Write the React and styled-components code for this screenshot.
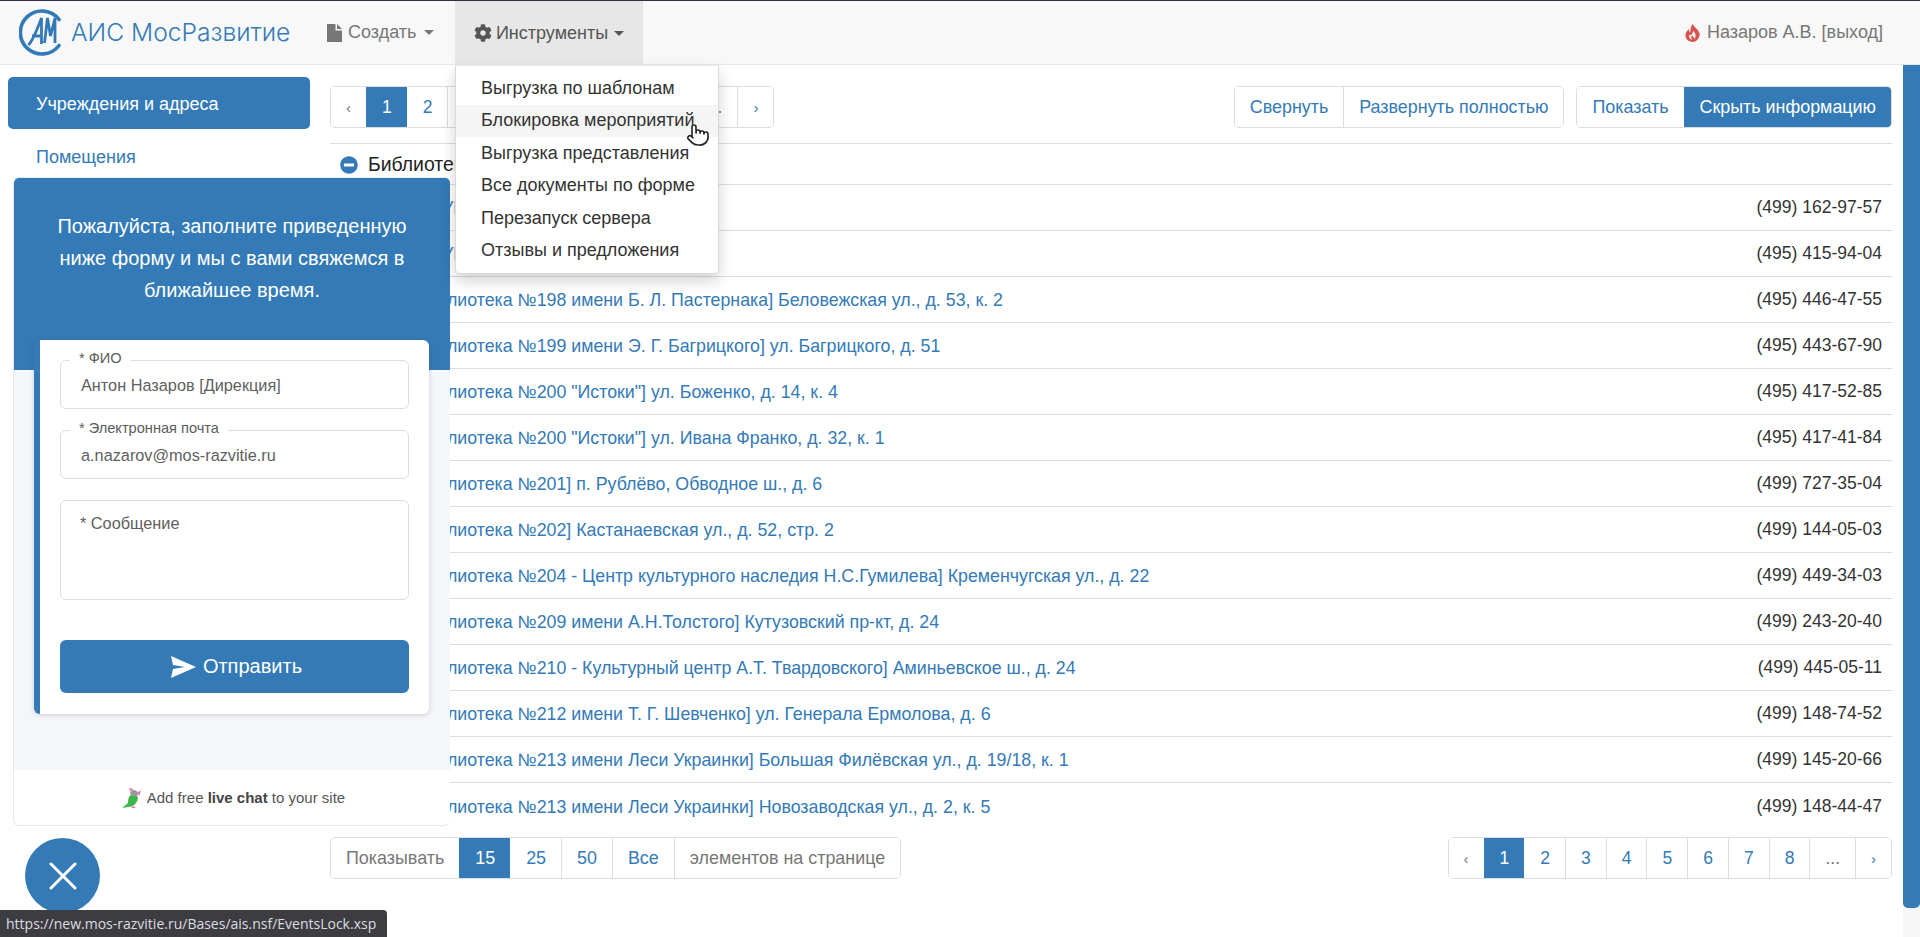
import React from 'react';
import styled, { createGlobalStyle } from 'styled-components';
import { FaCog, FaMinusCircle } from 'react-icons/fa';
import { Pointer } from 'lucide-react';

const BLUE = '#337ab7';

const GlobalStyle = createGlobalStyle`
  html, body {
    margin: 0;
    height: 100%;
    overflow: hidden;
    background: #fff;
  }
  body {
    font-family: "Liberation Sans", Arial, sans-serif;
    font-size: 18px;
    line-height: 25px;
    color: #333;
  }
  * { box-sizing: border-box; }
`;

const Page = styled.div`
  position: relative;
  height: 937px;
  border-top: 1px solid #2b3147;
  display: flex;
  flex-direction: column;
  overflow: hidden;
`;

const Navbar = styled.nav`
  height: 64px;
  flex: none;
  display: flex;
  align-items: stretch;
  background: #f8f8f8;
  border-bottom: 1px solid #e7e7e7;
  color: #777;
`;

const Brand = styled.div`
  width: 308px;
  padding-left: 19px;
  display: flex;
  align-items: center;
  gap: 6px;
  font-family: Inter, "Noto Sans", sans-serif;
  font-size: 24.6px;
  font-weight: 300;
  color: #337ab7;
`;

const NavItem = styled.div`
  display: flex;
  align-items: center;
  gap: ${({ $open }) => ($open ? '4px' : '6px')};
  padding: 0 ${({ $open }) => ($open ? '18.5px' : '19px')};
  margin-left: ${({ $open }) => ($open ? '2px' : '0')};
  height: ${({ $open }) => ($open ? '64px' : 'auto')};
  background: ${({ $open }) => ($open ? '#e7e7e7' : 'transparent')};
  color: ${({ $open }) => ($open ? '#555' : '#777')};

  svg { flex: none; }
`;

const Caret = styled.span`
  width: 0;
  height: 0;
  margin-left: 2px;
  border-top: 5px solid currentColor;
  border-left: 5px solid transparent;
  border-right: 5px solid transparent;
`;

const UserBox = styled.div`
  margin-left: auto;
  padding-right: 37px;
  display: flex;
  align-items: center;
  gap: 7px;
`;

const Dropdown = styled.ul`
  position: absolute;
  left: 455px;
  top: 64px;
  width: 264px;
  margin: 0;
  padding: 6px 0;
  list-style: none;
  background: #fff;
  border: 1px solid rgba(0, 0, 0, 0.15);
  border-top-color: #e7e7e7;
  border-radius: 0 0 5px 5px;
  box-shadow: 0 7px 15px rgba(0, 0, 0, 0.175);
  z-index: 5;
`;

const DropItem = styled.li`
  height: 32.5px;
  padding: 3.75px 25px;
  white-space: nowrap;
  background: ${({ $hover }) => ($hover ? '#f5f5f5' : 'transparent')};
`;

const CursorMark = styled.div`
  position: absolute;
  left: 686px;
  top: 122px;
  z-index: 6;
  line-height: 0;
  filter: drop-shadow(0 0 0.5px #fff);
`;

const Layout = styled.div`
  flex: 1;
  min-height: 0;
  display: flex;
`;

const Sidebar = styled.aside`
  width: 330px;
  flex: none;
  padding: 12px 20px 0 8px;
  display: flex;
  flex-direction: column;
  gap: 1px;
`;

const SideItem = styled.a`
  display: block;
  height: 52px;
  padding: 15px 28px;
  border-radius: 5px;
  color: ${({ $active }) => ($active ? '#fff' : BLUE)};
  background: ${({ $active }) => ($active ? BLUE : 'transparent')};
`;

const Main = styled.main`
  flex: 1;
  min-width: 0;
  padding: 21px 11px 0 0;
`;

const TopBar = styled.div`
  display: flex;
  align-items: center;
  gap: 12px;
  margin-bottom: 15px;
`;

const Group = styled.div`
  display: inline-flex;
  height: 42px;
  border: 1px solid #ddd;
  border-radius: 5px;
  overflow: hidden;
  background: #fff;
  font-size: ${({ $digits }) => ($digits ? '17.5px' : '17.9px')};
  margin-left: ${({ $pushed }) => ($pushed ? 'auto' : '0')};
`;

const Cell = styled.a`
  display: flex;
  align-items: center;
  justify-content: center;
  padding: 0 15px;
  margin: ${({ $active }) => ($active ? '-1px 0' : '0')};
  white-space: nowrap;
  font-size: ${({ $narrow }) => ($narrow ? '15px' : 'inherit')};
  border-left: 1px solid ${({ $active, $flush }) => ($active || $flush ? 'transparent' : '#ddd')};
  background: ${({ $active }) => ($active ? BLUE : '#fff')};
  color: ${({ $active, $muted }) => ($active ? '#fff' : $muted ? '#777' : BLUE)};

  &:first-child { border-left: 0; }
`;

const Table = styled.div`
  border-top: 1px solid #ddd;
`;

const GroupRow = styled.div`
  height: 40.5px;
  display: flex;
  align-items: center;
  gap: 10px;
  padding: 2px 0 0 10px;
  color: #222;
  font-size: 19.4px;
  border-bottom: 1px solid #ddd;

  svg { color: ${BLUE}; flex: none; }
`;

const Row = styled.div`
  height: 46.05px;
  display: flex;
  align-items: center;
  justify-content: space-between;
  padding: 0 10px 0 81px;
  border-bottom: ${({ $last }) => ($last ? '0' : '1px solid #ddd')};
`;

const RowLink = styled.a`
  padding-top: 2px;
  color: ${BLUE};
  font-size: 17.8px;
`;

const Phone = styled.span`
  font-size: 17.5px;
`;

const BottomBar = styled.div`
  display: flex;
  justify-content: space-between;
  margin-top: 8px;
`;

const ScrollTrack = styled.div`
  width: 17px;
  flex: none;
  background: #f7f7f7;
`;

const ScrollThumb = styled.div`
  height: 843px;
  background: ${BLUE};
  border-radius: 0 0 5px 5px;
`;

const ChatWidget = styled.section`
  position: absolute;
  left: 13px;
  top: 176px;
  width: 437px;
  height: 649px;
  display: flex;
  flex-direction: column;
  background: #fff;
  border: 1px solid #e8e8ec;
  border-right: 0;
  border-radius: 6px;
  z-index: 4;
`;

const ChatHeader = styled.header`
  height: 192px;
  flex: none;
  padding-top: 32px;
  background: ${BLUE};
  color: #fff;
  font-size: 20px;
  line-height: 32px;
  text-align: center;
  border-radius: 5px 5px 0 0;
`;

const ChatBody = styled.div`
  flex: 1;
  background: #f5f6f9;
  padding-left: 20px;
`;

const ChatCard = styled.form`
  width: 395px;
  height: 374px;
  margin-top: -30px;
  position: relative;
  padding: 20px 20px 20px;
  display: flex;
  flex-direction: column;
  gap: 21px;
  background: #fff;
  border-left: 6px solid ${BLUE};
  border-radius: 6px;
  box-shadow: 0 1px 5px rgba(60, 60, 80, 0.22);
`;

const Field = styled.div`
  position: relative;
  height: ${({ $tall }) => ($tall ? '100px' : '49px')};
  padding: ${({ $tall }) => ($tall ? '10px 19px' : '2px 20px 0')};
  display: flex;
  align-items: ${({ $tall }) => ($tall ? 'flex-start' : 'center')};
  border: 1px solid #dcdde6;
  border-radius: 6px;
  font-size: 16.3px;
  color: #606060;
`;

const FieldLabel = styled.label`
  position: absolute;
  left: 9px;
  top: -12px;
  padding: 0 9px;
  background: #fff;
  font-size: 14.6px;
  line-height: 18px;
  color: #5c5c5c;
`;

const SendButton = styled.button`
  margin-top: 19px;
  height: 53px;
  padding-left: 10px;
  border: 0;
  border-radius: 6px;
  background: ${BLUE};
  color: #fff;
  font: inherit;
  font-size: 20px;
  display: flex;
  align-items: center;
  justify-content: center;
  gap: 7px;
`;

const ChatFooter = styled.footer`
  height: 55px;
  flex: none;
  display: flex;
  align-items: center;
  justify-content: center;
  gap: 5px;
  padding-left: 3px;
  font-size: 15px;
  color: #555;

  b { color: #444; }
`;

const CloseBubble = styled.button`
  position: absolute;
  left: 25px;
  top: 837px;
  width: 75px;
  height: 75px;
  padding: 0;
  border: 0;
  border-radius: 50%;
  background: ${BLUE};
  display: flex;
  align-items: center;
  justify-content: center;
  z-index: 4;
`;

const StatusBar = styled.div`
  position: absolute;
  left: 0;
  bottom: 0;
  width: 387px;
  height: 27px;
  padding-left: 6px;
  background: #3c3c41;
  color: #dcdce0;
  border-radius: 0 4px 0 0;
  font-family: "Open Sans", "Noto Sans", sans-serif;
  font-size: 14px;
  line-height: 27px;
  white-space: nowrap;
  z-index: 7;
`;

const MENU = [
  'Выгрузка по шаблонам',
  'Блокировка мероприятий',
  'Выгрузка представления',
  'Все документы по форме',
  'Перезапуск сервера',
  'Отзывы и предложения',
];

const ROWS = [
  ['[МБУК №194] ул. Кедрова, д. 14', '(499) 162-97-57'],
  ['[МБУК №196] ул. Лобачевского, д. 6', '(495) 415-94-04'],
  ['[Библиотека №198 имени Б. Л. Пастернака] Беловежская ул., д. 53, к. 2', '(495) 446-47-55'],
  ['[Библиотека №199 имени Э. Г. Багрицкого] ул. Багрицкого, д. 51', '(495) 443-67-90'],
  ['[Библиотека №200 "Истоки"] ул. Боженко, д. 14, к. 4', '(495) 417-52-85'],
  ['[Библиотека №200 "Истоки"] ул. Ивана Франко, д. 32, к. 1', '(495) 417-41-84'],
  ['[Библиотека №201] п. Рублёво, Обводное ш., д. 6', '(499) 727-35-04'],
  ['[Библиотека №202] Кастанаевская ул., д. 52, стр. 2', '(499) 144-05-03'],
  ['[Библиотека №204 - Центр культурного наследия Н.С.Гумилева] Кременчугская ул., д. 22', '(499) 449-34-03'],
  ['[Библиотека №209 имени А.Н.Толстого] Кутузовский пр-кт, д. 24', '(499) 243-20-40'],
  ['[Библиотека №210 - Культурный центр А.Т. Твардовского] Аминьевское ш., д. 24', '(499) 445-05-11'],
  ['[Библиотека №212 имени Т. Г. Шевченко] ул. Генерала Ермолова, д. 6', '(499) 148-74-52'],
  ['[Библиотека №213 имени Леси Украинки] Большая Филёвская ул., д. 19/18, к. 1', '(499) 145-20-66'],
  ['[Библиотека №213 имени Леси Украинки] Новозаводская ул., д. 2, к. 5', '(499) 148-44-47'],
];

const LogoMark = () => (
  <svg width="46" height="47" viewBox="0 0 46 47" fill="none" stroke={BLUE}>
    <path d="M40 10.5 A21.5 21.5 0 1 0 40 36.5" strokeWidth="3.6" strokeLinecap="round" />
    <path d="M9.5 36 C15 30 18 20 22.5 9 L22.5 35 M13 27 H22" strokeWidth="2.8" />
    <path d="M25.5 34 L28.5 9 L31.5 27 L36 9 L36 34" strokeWidth="2.8" />
  </svg>
);

const FileIcon = () => (
  <svg width="15" height="18" viewBox="0 0 15 18" fill="#777">
    <path d="M0 0 H8.5 V6.5 H15 V18 H0 Z M10 0 L15 5 H10 Z" />
  </svg>
);

const FlameIcon = () => (
  <svg width="15" height="18" viewBox="0 0 15 18">
    <path
      fill="#d9534f"
      d="M7.5 0 C9 3 13 5 14.5 9 C15.5 13 12 17.5 8 18 C3 18 0 14.5 0.5 10.5 C0.8 8 2.5 6.5 3.5 5 C4 7 4.5 8 5.5 8.5 C5 5.5 6 2.5 7.5 0 Z"
    />
    <path
      fill="#f8f8f8"
      d="M8.5 7 C10.5 9.5 11.5 12 9.5 15 C9 13 7.5 12.5 7 11 C6 12.5 6 14 7 16 C4.5 15 3.5 12.5 4.5 10.5 C5.5 11.5 6.5 11 7 10 C7.5 9 8 8 8.5 7 Z"
    />
  </svg>
);

const PlaneIcon = () => (
  <svg width="25" height="22" viewBox="0 0 25 22" fill="#fff">
    <path d="M0 0 L25 11 L0 22 L2 13 L14 11 L2 9 Z" />
  </svg>
);

const CloseIcon = () => (
  <svg width="28" height="28" viewBox="0 0 28 28" stroke="#fff" strokeWidth="3" strokeLinecap="round">
    <path d="M2 2 L26 26 M26 2 L2 26" />
  </svg>
);

const ParrotIcon = () => (
  <svg width="20" height="22" viewBox="0 0 20 22">
    <path d="M0 21 L6 16 C6 9 9 7 12 7 L16 10 C16 15 12 20 6 20 Z" fill="#3db54a" />
    <path d="M8 6 C8 2 16 2 16 7 C16 10 10 11 8 6 Z" fill="#9a9a9a" />
    <path d="M8 4 L7 1 L12 2 Z M15 5 L19 4 L17 9 Z M11 19 L14 21 L9 21 Z" fill="#ec6fa5" />
  </svg>
);

const Pager = () => (
  <Group $digits>
    <Cell $narrow $muted>‹</Cell>
    <Cell $active>1</Cell>
    {[2, 3, 4, 5, 6, 7, 8].map((n, i) => (
      <Cell key={n} $flush={i === 0}>{n}</Cell>
    ))}
    <Cell $muted>...</Cell>
    <Cell $narrow>›</Cell>
  </Group>
);

export default function App() {
  return (
    <>
      <GlobalStyle />
      <Page>
        <Navbar>
          <Brand>
            <LogoMark />
            <span>АИС МосРазвитие</span>
          </Brand>
          <NavItem>
            <FileIcon />
            <span>Создать</span>
            <Caret />
          </NavItem>
          <NavItem $open>
            <FaCog size={18} />
            <span>Инструменты</span>
            <Caret />
          </NavItem>
          <UserBox>
            <FlameIcon />
            <span>Назаров А.В. [выход]</span>
          </UserBox>
        </Navbar>

        <Layout>
          <Sidebar>
            <SideItem $active>Учреждения и адреса</SideItem>
            <SideItem>Помещения</SideItem>
          </Sidebar>
          <Main>
            <TopBar>
              <Pager />
              <Group $pushed>
                <Cell>Свернуть</Cell>
                <Cell>Развернуть полностью</Cell>
              </Group>
              <Group>
                <Cell>Показать</Cell>
                <Cell $active>Скрыть информацию</Cell>
              </Group>
            </TopBar>
            <Table>
              <GroupRow>
                <FaMinusCircle size={18} />
                <span>Библиотеки</span>
              </GroupRow>
              {ROWS.map(([name, phone], i) => (
                <Row key={name} $last={i === ROWS.length - 1}>
                  <RowLink>{name}</RowLink>
                  <Phone>{phone}</Phone>
                </Row>
              ))}
            </Table>
            <BottomBar>
              <Group>
                <Cell $muted>Показывать</Cell>
                <Cell $active>15</Cell>
                <Cell $flush>25</Cell>
                <Cell>50</Cell>
                <Cell>Все</Cell>
                <Cell $muted>элементов на странице</Cell>
              </Group>
              <Pager />
            </BottomBar>
          </Main>
          <ScrollTrack>
            <ScrollThumb />
          </ScrollTrack>
        </Layout>

        <Dropdown>
          {MENU.map((item, i) => (
            <DropItem key={item} $hover={i === 1}>{item}</DropItem>
          ))}
        </Dropdown>
        <CursorMark>
          <Pointer size={24} color="#222" fill="#fff" strokeWidth={1.6} />
        </CursorMark>

        <ChatWidget>
          <ChatHeader>
            Пожалуйста, заполните приведенную
            <br />
            ниже форму и мы с вами свяжемся в
            <br />
            ближайшее время.
          </ChatHeader>
          <ChatBody>
            <ChatCard>
              <Field>
                <FieldLabel>* ФИО</FieldLabel>
                Антон Назаров [Дирекция]
              </Field>
              <Field>
                <FieldLabel>* Электронная почта</FieldLabel>
                a.nazarov@mos-razvitie.ru
              </Field>
              <Field $tall>* Сообщение</Field>
              <SendButton type="button">
                <PlaneIcon />
                Отправить
              </SendButton>
            </ChatCard>
          </ChatBody>
          <ChatFooter>
            <ParrotIcon />
            <span>Add free <b>live chat</b> to your site</span>
          </ChatFooter>
        </ChatWidget>

        <CloseBubble type="button" aria-label="Закрыть">
          <CloseIcon />
        </CloseBubble>
        <StatusBar>https://new.mos-razvitie.ru/Bases/ais.nsf/EventsLock.xsp</StatusBar>
      </Page>
    </>
  );
}
